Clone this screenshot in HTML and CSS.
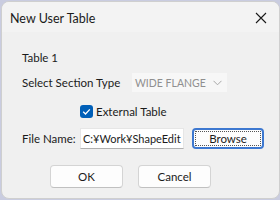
FILE: index.html
```html
<!DOCTYPE html>
<html>
<head>
<meta charset="utf-8">
<link rel="stylesheet" href="styles.css">
</head>
<body>
<div class="window">
  <div class="titlebar">
    <span class="title">New User Table</span>
    <svg class="close" width="12" height="12" viewBox="0 0 12 12"><path d="M1 1 L11 11 M11 1 L1 11" stroke="#1a1a1a" stroke-width="1.1" fill="none"/></svg>
  </div>
  <div class="content">
    <div class="row r-table">Table 1</div>
    <div class="row r-select">
      <span class="label label-select">Select Section Type</span>
      <div class="combo">
        <span>WIDE FLANGE</span>
        <svg width="9" height="6" viewBox="0 0 9 6"><path d="M0.5 0.8 L4.5 4.8 L8.5 0.8" stroke="#a8a8a8" stroke-width="1" fill="none"/></svg>
      </div>
    </div>
    <div class="row r-check">
      <span class="checkbox"><svg width="13" height="13" viewBox="0 0 13 13"><path d="M3.2 6.8 L5.5 9 L9.8 4.4" stroke="#fff" stroke-width="1.3" fill="none"/></svg></span>
      <span class="check-label">External Table</span>
    </div>
    <div class="row r-file">
      <span class="label label-file">File Name:</span>
      <div class="input">C:¥Work¥ShapeEdit</div>
      <div class="btn browse"><span class="focus">Browse</span></div>
    </div>
    <div class="row r-buttons">
      <div class="btn">OK</div>
      <div class="btn">Cancel</div>
    </div>
  </div>
</div>
</body>
</html>
```
FILE: styles.css
```css
html, body {
  margin: 0;
  padding: 0;
}
body {
  width: 280px;
  height: 200px;
  background: #c9cce0;
  font-family: Lato, "Noto Sans", "Liberation Sans", sans-serif;
  font-size: 11.5px;
  color: #1b1b1b;
  overflow: hidden;
}
.window {
  position: relative;
  margin: 1px 0 0 1px;
  width: 277px;
  height: 196px;
  border: 1px solid #cfcfcf;
  border-radius: 8px;
  background: #f0f0f0;
  overflow: hidden;
}
.titlebar {
  height: 30px;
  background: #f3f3f3;
  display: flex;
  align-items: center;
  justify-content: space-between;
  padding: 0 12px 0 8px;
}
.title {
  font-size: 12.5px;
  margin-top: 2px;
  white-space: nowrap;
}
.close {
  margin-top: 1px;
  flex-shrink: 0;
}
.content {
  display: flex;
  flex-direction: column;
  padding-left: 20px;
}
.row {
  display: flex;
  align-items: center;
  white-space: nowrap;
}
.row > * {
  flex-shrink: 0;
}
.r-table {
  margin-top: 17px;
  height: 16px;
}
.r-select {
  margin-top: 8px;
  height: 19px;
}
.label-select {
  width: 110px;
}
.combo {
  width: 95px;
  height: 19px;
  background: #f7f7f7;
  display: flex;
  align-items: center;
  justify-content: space-between;
  padding: 0 5px 0 3px;
  box-sizing: border-box;
  color: #8f8f8f;
  font-size: 10.5px;
}
.r-check {
  margin-top: 13px;
  height: 13px;
  padding-left: 58px;
}
.checkbox {
  width: 13px;
  height: 13px;
  border-radius: 3px;
  background: #005fb8;
  display: flex;
}
.check-label {
  margin-left: 3px;
}
.r-file {
  margin-top: 10px;
  height: 21px;
}
.label-file {
  width: 58px;
}
.input {
  width: 104px;
  height: 21px;
  box-sizing: border-box;
  background: #fff;
  border: 1px solid #e6e6e6;
  border-bottom-color: #b0b0b0;
  padding: 0 2px;
  line-height: 19px;
  overflow: hidden;
  font-size: 11px;
}
.btn {
  width: 73px;
  height: 23px;
  box-sizing: border-box;
  background: #fdfdfd;
  border: 1px solid #d4d4d4;
  border-bottom-color: #c0c0c0;
  border-radius: 4px;
  display: flex;
  align-items: center;
  justify-content: center;
}
.browse {
  margin-left: 8px;
  width: 72px;
  height: 21px;
  border: 2px solid #3d78d0;
  border-radius: 4px;
  padding: 1px;
}
.focus {
  flex: 1;
  align-self: stretch;
  border: 1px dotted #555;
  display: flex;
  align-items: center;
  justify-content: center;
}
.r-buttons {
  margin-top: 16px;
  padding-left: 28px;
  gap: 15px;
}
```
